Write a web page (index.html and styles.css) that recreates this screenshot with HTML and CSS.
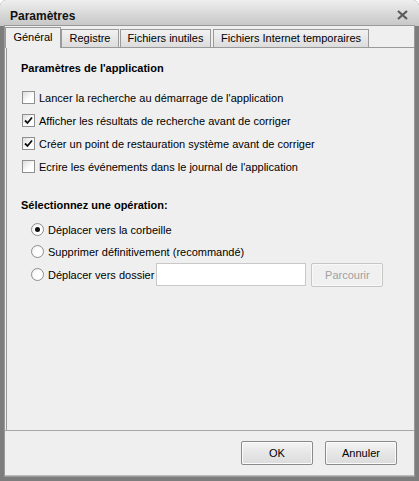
FILE: index.html
```html
<!DOCTYPE html>
<html lang="fr">
<head>
<meta charset="utf-8">
<title>Paramètres</title>
<link rel="stylesheet" href="styles.css">
</head>
<body>
<div class="window">
  <div class="titlebar">
    <span class="title">Paramètres</span>
    <span class="close">
      <svg width="11" height="10" viewBox="0 0 11 10"><path d="M1 1 L10 9 M10 1 L1 9" stroke="#5a5a5a" stroke-width="2.2" fill="none"/></svg>
    </span>
  </div>
  <div class="client">
    <div class="tabs">
      <div class="tab active t1">Général</div>
      <div class="tab t2">Registre</div>
      <div class="tab t3">Fichiers inutiles</div>
      <div class="tab t4">Fichiers Internet temporaires</div>
    </div>
    <div class="panel">
      <div class="group-title">Paramètres de l'application</div>
      <div class="checks">
        <label class="row"><span class="cb"></span>Lancer la recherche au démarrage de l'application</label>
        <label class="row"><span class="cb"><svg width="9" height="9" viewBox="0 0 9 9"><path d="M1 4.5 L3.5 7 L8 1.5" stroke="#111" stroke-width="1.8" fill="none"/></svg></span>Afficher les résultats de recherche avant de corriger</label>
        <label class="row"><span class="cb"><svg width="9" height="9" viewBox="0 0 9 9"><path d="M1 4.5 L3.5 7 L8 1.5" stroke="#111" stroke-width="1.8" fill="none"/></svg></span>Créer un point de restauration système avant de corriger</label>
        <label class="row"><span class="cb"></span>Ecrire les événements dans le journal de l'application</label>
      </div>
      <div class="group-title second">Sélectionnez une opération:</div>
      <div class="radios">
        <label class="row"><span class="rb on"></span>Déplacer vers la corbeille</label>
        <label class="row"><span class="rb"></span>Supprimer définitivement (recommandé)</label>
        <div class="row"><span class="rb"></span>Déplacer vers dossier<span class="field"></span><span class="btn disabled">Parcourir</span></div>
      </div>
    </div>
    <div class="footer">
      <span class="btn">OK</span>
      <span class="btn">Annuler</span>
    </div>
  </div>
</div>
</body>
</html>
```
FILE: styles.css
```css
html, body {
  margin: 0;
  padding: 0;
  background: #ffffff;
}
body {
  font-family: "Liberation Sans", Arial, sans-serif;
  font-size: 11px;
  color: #000;
}
.window {
  width: 419px;
  height: 481px;
  box-sizing: border-box;
  display: flex;
  flex-direction: column;
  background: #7d7d7d;
  border-radius: 6px 6px 0 0;
  overflow: hidden;
}
.titlebar {
  height: 26px;
  flex: none;
  display: flex;
  align-items: center;
  justify-content: space-between;
  padding: 0 11px 0 10px;
  background: linear-gradient(#efefef, #d8d8d8 55%, #c6c6c6);
}
.title {
  font-weight: bold;
  font-size: 12px;
  color: #111;
  padding-top: 5px;
}
.close {
  display: flex;
  padding-top: 3px;
}
.client {
  flex: 1;
  margin: 0 5px 5px 5px;
  background: #efefef;
  display: flex;
  flex-direction: column;
  box-shadow: inset 0 -1px 0 #bcbcbc;
  outline: 1px solid #9a9a9a;
}
.tabs {
  display: flex;
  height: 20px;
  padding-top: 1px;
  align-items: flex-end;
  position: relative;
  z-index: 1;
}
.tab {
  height: 18px;
  box-sizing: border-box;
  border: 1px solid #9a9a9a;
  border-bottom: 0;
  line-height: 17px;
  text-align: center;
  background: linear-gradient(#f2f2f2, #dcdcdc);
  color: #000;
  white-space: nowrap;
}
.tab.active {
  line-height: 19px;
  background: #efefef;
  margin-bottom: -1px;
  height: 21px;
}
.t1 { width: 56px; }
.t2 { width: 58px; margin-left: 0; }
.t3 { width: 91px; margin-left: 1px; }
.t4 { width: 156px; margin-left: 2px; }
.panel {
  margin: 0 0 0 1px;
  height: 384px;
  box-sizing: border-box;
  border: 1px solid #9a9a9a;
  border-right: 0;
  background: #efefef;
  padding: 14px 0 0 14px;
}
.group-title {
  font-weight: bold;
  font-size: 11px;
  height: 16px;
}
.group-title.second {
  margin-top: 26px;
}
.checks {
  margin-top: 13px;
  display: flex;
  flex-direction: column;
  gap: 10px;
}
.row {
  display: flex;
  align-items: center;
  height: 13px;
  white-space: nowrap;
}
.cb {
  width: 13px;
  height: 13px;
  box-sizing: border-box;
  border: 1px solid #8e8f8f;
  background: linear-gradient(135deg, #dcdcdc, #ffffff 60%);
  margin: 0 4px 0 1px;
  display: flex;
  align-items: center;
  justify-content: center;
  flex: none;
}
.radios {
  margin-top: 8px;
  padding-left: 9px;
  display: flex;
  flex-direction: column;
  gap: 9px;
}
.radios .row:last-child { height: 23px; margin-top: -4px; }
.rb {
  width: 13px;
  height: 13px;
  box-sizing: border-box;
  border: 1px solid #8e8f8f;
  border-radius: 50%;
  background: radial-gradient(circle at 60% 60%, #ffffff 40%, #e4e4e4);
  margin: 0 4px 0 1px;
  flex: none;
  position: relative;
}
.rb.on::after {
  content: "";
  position: absolute;
  left: 3px;
  top: 3px;
  width: 5px;
  height: 5px;
  border-radius: 50%;
  background: #111;
}
.field {
  width: 150px;
  height: 23px;
  box-sizing: border-box;
  border: 1px solid #c8c8c8;
  background: #fff;
  margin-left: 2px;
}
.btn {
  display: inline-flex;
  align-items: center;
  justify-content: center;
  width: 72px;
  height: 24px;
  box-sizing: border-box;
  border: 1px solid #8a8a8a;
  border-radius: 2px;
  background: linear-gradient(#f4f4f4, #e6e6e6 50%, #dcdcdc);
  box-shadow: inset 0 0 0 1px #fbfbfb;
  color: #000;
}
.btn.disabled {
  border-color: #c6c6c6;
  background: #f0f0f0;
  color: #a0a0a0;
  box-shadow: inset 0 0 0 1px #f8f8f8;
  margin-left: 5px;
}
.footer {
  flex: 1;
  display: flex;
  justify-content: flex-end;
  align-items: flex-start;
  gap: 12px;
  padding: 10px 17px 0 0;
  border-top: 1px solid #a8a8a8;
  margin-top: -1px;
}
```
